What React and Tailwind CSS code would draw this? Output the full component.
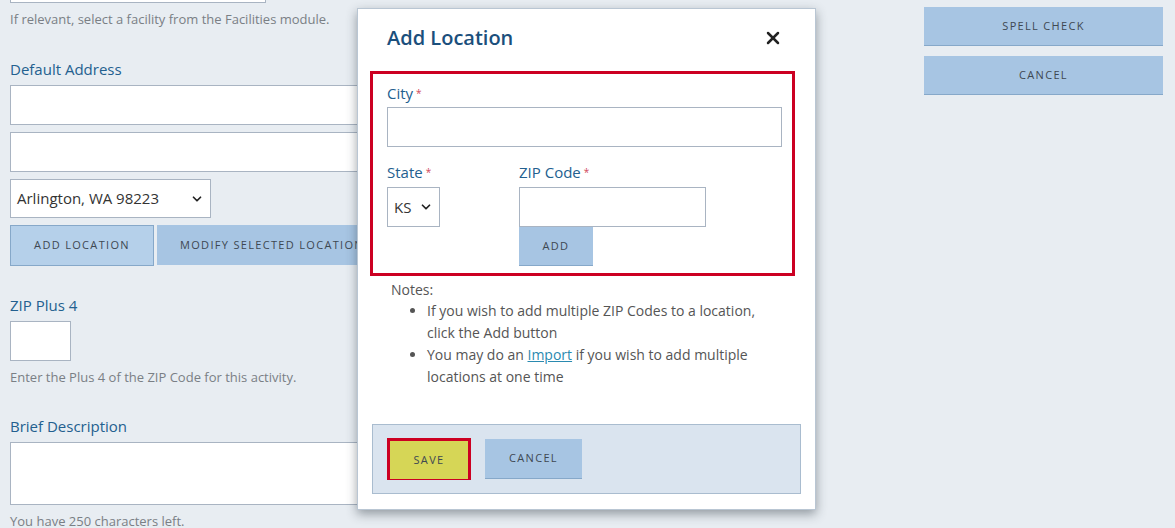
import { X, ChevronDown } from "lucide-react";

const font = { fontFamily: "'Open Sans', 'Noto Sans', sans-serif" };

function Btn({ children, className = "" }) {
  return (
    <button
      className={`bg-[#a7c5e3] border-b border-[#86a8c9] text-[11px] tracking-[0.12em] uppercase text-[#3e4852] ${className}`}
    >
      {children}
    </button>
  );
}

function Select({ value, className = "" }) {
  return (
    <div className={`relative bg-white border border-[#a9b4c2] flex items-center ${className}`}>
      <span className="pl-[6px] text-[15px] text-[#333]">{value}</span>
      <ChevronDown className="absolute right-[6px] w-[14px] h-[14px] text-[#222]" strokeWidth={3} />
    </div>
  );
}

function Label({ children, req }) {
  return (
    <div className="text-[15px] leading-[20px] text-[#23608f]">
      {children}
      {req && <span className="text-[#d0485a] text-[10px] align-top ml-[3px]">*</span>}
    </div>
  );
}

export default function App() {
  return (
    <div className="relative w-[1175px] h-[528px] overflow-hidden bg-[#e8edf2]" style={font}>
      <div className="flex">
        {/* left form */}
        <div className="w-[924px] pl-[10px]">
          <div className="h-[3px] w-[256px] bg-white border-x border-b border-[#a9b4c2]" />
          <p className="mt-[7px] text-[13px] leading-[18px] text-[#7a7f85]">
            If relevant, select a facility from the Facilities module.
          </p>
          <div className="mt-[31px]">
            <Label>Default Address</Label>
          </div>
          <div className="mt-[6px] h-[40px] w-[780px] bg-white border border-[#a9b4c2]" />
          <div className="mt-[7px] h-[40px] w-[780px] bg-white border border-[#a9b4c2]" />
          <Select value="Arlington, WA 98223" className="mt-[7px] h-[39px] w-[201px]" />
          <div className="mt-[7px] flex gap-[3px]">
            <Btn className="h-[41px] w-[144px] bg-[#b5d0ea] border border-[#7f9db8]">Add Location</Btn>
            <Btn className="h-[40px] w-[230px] border-b-0 whitespace-nowrap">Modify Selected Location</Btn>
          </div>
          <div className="mt-[29px]">
            <Label>ZIP Plus 4</Label>
          </div>
          <div className="mt-[6px] h-[40px] w-[61px] bg-white border border-[#a9b4c2]" />
          <p className="mt-[7px] text-[13px] leading-[18px] text-[#7a7f85]">
            Enter the Plus 4 of the ZIP Code for this activity.
          </p>
          <div className="mt-[30px]">
            <Label>Brief Description</Label>
          </div>
          <div className="mt-[6px] h-[63px] w-[780px] bg-white border border-[#a9b4c2]" />
          <p className="mt-[7px] text-[13px] leading-[18px] text-[#7a7f85]">
            You have 250 characters left.
          </p>
        </div>

        {/* right actions */}
        <div className="pt-[7px] flex flex-col gap-[10px]">
          <Btn className="h-[39px] w-[239px]">Spell Check</Btn>
          <Btn className="h-[39px] w-[239px]">Cancel</Btn>
        </div>
      </div>

      {/* modal */}
      <div className="absolute left-[357px] top-[8px] w-[459px] h-[502px] bg-white border border-[#b9c6d3] shadow-[0_4px_10px_rgba(40,50,60,0.45)] px-[12px]">
        <div className="flex items-center justify-between h-[55px] pl-[17px] pr-[20px] pt-[3px]">
          <h2 className="text-[20px] font-semibold text-[#1b4f7c]">Add Location</h2>
          <X className="w-[20px] h-[20px] text-[#222]" strokeWidth={3} />
        </div>
        <div className="mt-[7px] h-[205px] w-[425px] border-[3px] border-[#cc0022] pl-[14px] pr-[10px] pt-[9px]">
          <Label req>City</Label>
          <div className="mt-[4px] h-[40px] w-[395px] bg-white border border-[#a9b4c2]" />
          <div className="mt-[15px] flex">
            <div className="w-[132px]">
              <Label req>State</Label>
              <Select value="KS" className="mt-[5px] h-[40px] w-[53px]" />
            </div>
            <div>
              <Label req>ZIP Code</Label>
              <div className="mt-[5px] h-[40px] w-[187px] bg-white border border-[#a9b4c2]" />
              <Btn className="h-[39px] w-[74px]">Add</Btn>
            </div>
          </div>
        </div>
        <div className="pl-[21px] pt-[4px] text-[14px] leading-[22px] text-[#555]">
          <p className="leading-[20px]">Notes:</p>
          <ul className="list-disc pl-[36px] pr-[20px]">
            <li>If you wish to add multiple ZIP Codes to a location, click the Add button</li>
            <li>
              You may do an <a className="underline text-[#2a8ab0]">Import</a> if you wish to add multiple
              locations at one time
            </li>
          </ul>
        </div>
        <div className="mt-[36px] ml-[2px] h-[70px] w-[429px] bg-[#dae4ef] border border-[#a9bccf] flex items-center gap-[14px] pl-[14px]">
          <Btn className="h-[42px] w-[84px] bg-[#d6d656] border-[3px] border-[#cc0022]">Save</Btn>
          <Btn className="h-[40px] w-[97px]">Cancel</Btn>
        </div>
      </div>
    </div>
  );
}
